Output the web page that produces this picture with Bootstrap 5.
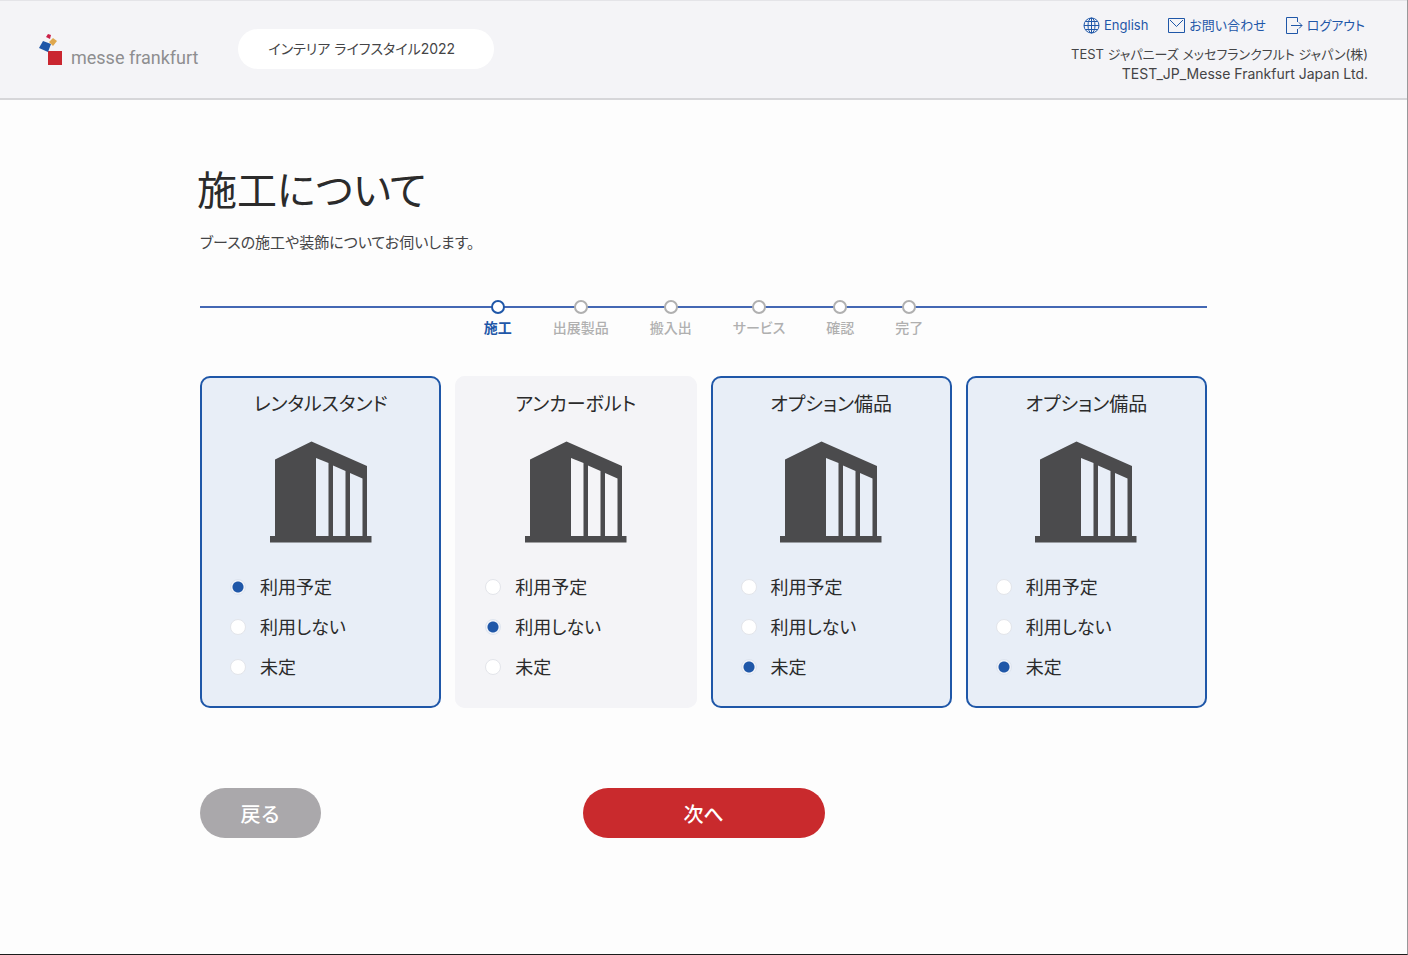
<!DOCTYPE html>
<html lang="ja">
<head>
<meta charset="utf-8">
<meta name="viewport" content="width=device-width, initial-scale=1">
<title>施工について</title>
<link href="https://cdn.jsdelivr.net/npm/bootstrap@5.3.0/dist/css/bootstrap.min.css" rel="stylesheet">
<style>
  :root { --blue: #1f57a8; --ink: #2b2b2b; --soft: #444446; --red: #c92a2d; --gray: #aaa8ab; }
  body {
    font-family: Inter, "Noto Sans CJK JP", sans-serif;
    font-feature-settings: "palt";
    font-size: 14px;
    line-height: 20px;
    color: var(--ink);
    background: #fdfdfd;
    border-right: 1px solid #98989a;
    border-bottom: 1px solid #1c1c1c;
  }
  .site-header { background: #f4f4f7; border-top: 1px solid #e4e4e8; border-bottom: 2px solid #d6d6d9; padding: 14px 39px 14px; color: var(--soft); }
  .identity { padding-top: 14px; }
  .brand { color: #8e8e90; font-family: Roboto, sans-serif; font-size: 18px; line-height: 24px; padding-top: 5px; }
  .brand svg { width: 24px; height: 32px; }
  .brand span { padding-top: 12px; }
  .event-pill { background: #fff; border-radius: 20px; padding: 10px 30px; min-width: 256px; margin-left: 40px; }
  .tools { gap: 20px; font-size: 13px; padding-right: 3px; margin-bottom: 9px; }
  .tools a { color: var(--blue); }
  .tools svg { width: 17px; height: 17px; fill: none; stroke: currentColor; }
  .company { font-size: 13px; }
  .page-body { max-width: 1007px; }
  h1 { font-size: 40px; line-height: 56px; font-weight: 400; margin: 63px 0 14px -3px; }
  .lead-in { font-size: 15px; color: var(--soft); }
  .steps { margin: 47px 0 0; background: linear-gradient(#4468b4, #4468b4) 0 6px / 100% 2px no-repeat; gap: 41px; font-weight: 500; color: #b0b0b0; }
  .steps li::before { content: ""; width: 14px; height: 14px; border-radius: 50%; border: 2px solid #b0b0b0; background: #fff; margin-bottom: 4px; }
  .steps .current { color: var(--blue); font-weight: 700; }
  .steps .current::before { border-color: var(--blue); }
  .choices { --bs-gutter-x: 14px; --bs-gutter-y: 14px; margin-top: 24px; }
  .choice { min-width: 0; margin: 0; background: #f4f4f7; border: 2px solid #f4f4f7; border-radius: 10px; padding: 15px 28px 19px; }
  .choice.picked { background: #e8eef7; border-color: var(--blue); }
  .choice legend { font-size: 19px; line-height: 24px; margin: 0 0 24px; text-align: center; }
  .choice svg { clear: both; width: 102px; height: 102px; display: block; margin: 0 auto 24px; fill: #4b4b4d; }
  .form-check { min-height: 40px; padding: 0; margin: 0; gap: 14px; }
  .form-check .form-check-input { width: 16px; height: 16px; margin: 0; float: none; flex: none; background: #fff; border: 1px solid #e3e5ea; }
  .form-check .form-check-input:checked { background: radial-gradient(circle, var(--blue) 5px, #f0f3f9 6px); border-color: #dfe5ef; }
  .form-check-label { font-size: 18px; line-height: 38px; padding-top: 2px; }
  .actions { margin: 80px 0 116px; display: grid; grid-template-columns: 1fr 242px 1fr; }
  .actions .btn { height: 50px; border-radius: 25px; border: 0; color: #fff; font-size: 20px; font-weight: 500; padding: 8px 12px 4px; }
  .btn-return { width: 121px; background: var(--gray); }
  .btn-next { background: var(--red); }
</style>
</head>
<body>
<svg class="d-none" aria-hidden="true">
  <symbol id="booth" viewBox="0 0 102 102"><path fill-rule="evenodd" d="M5 18.500 41.500 0.500 97 25V95h4.500v6.500H0V95h5zM46 17V95H58.500V22zM63 24.500V95H75.500V30zM80 32V95H92.500V37.500z"/></symbol>
</svg>

<header class="site-header d-flex justify-content-between align-items-start">
  <div class="identity d-flex align-items-start">
    <a href="#" class="brand d-flex gap-2 text-decoration-none">
      <svg viewBox="0 0 24 32" aria-hidden="true">
        <path fill="#ca2630" d="M9 17h14v14H9z"/>
        <path fill="#1f57a8" d="m4 7 8 3-3 8-9-4z"/>
        <path fill="#dfa84e" d="m14 4 4 3-4 5-4-4z"/>
        <path fill="#cb2148" d="m9 0 3 1-1 4-4-2z"/>
      </svg>
      <span>messe frankfurt</span>
    </a>
    <div class="event-pill">インテリア ライフスタイル2022</div>
  </div>
  <div class="text-end">
    <nav class="tools d-flex justify-content-end">
      <a href="#" class="d-flex align-items-center gap-1 text-decoration-none">
        <svg viewBox="0 0 17 17" aria-hidden="true"><circle cx="8.500" cy="8.500" r="7.500"/><ellipse cx="8.500" cy="8.500" rx="3.500" ry="7.500"/><path d="M8.500 1v15M1 8.500h15M2.500 4.500h12M2.500 12.500h12"/></svg>English</a>
      <a href="#" class="d-flex align-items-center gap-1 text-decoration-none">
        <svg viewBox="0 0 17 17" aria-hidden="true"><path d="M.5 1.500h16v14H.5zM2 3l6.500 6.500L15 3"/></svg>お問い合わせ</a>
      <a href="#" class="d-flex align-items-center gap-1 text-decoration-none">
        <svg viewBox="0 0 17 17" aria-hidden="true"><path d="M11.500 5V.5H.5v16h11V12M5 8.500h11M13 5.500l3 3-3 3"/></svg>ログアウト</a>
    </nav>
    <div class="company">TEST ジャパニーズ メッセフランクフルト ジャパン(株)</div>
    <div>TEST_JP_Messe Frankfurt Japan Ltd.</div>
  </div>
</header>

<main class="page-body container-fluid p-0">
  <h1>施工について</h1>
  <p class="lead-in mb-0">ブースの施工や装飾についてお伺いします。</p>

  <ol class="steps list-unstyled d-flex justify-content-center">
    <li class="current d-flex flex-column align-items-center" aria-current="step">施工</li>
    <li class="d-flex flex-column align-items-center">出展製品</li>
    <li class="d-flex flex-column align-items-center">搬入出</li>
    <li class="d-flex flex-column align-items-center">サービス</li>
    <li class="d-flex flex-column align-items-center">確認</li>
    <li class="d-flex flex-column align-items-center">完了</li>
  </ol>

  <form>
    <div class="choices row row-cols-2 row-cols-lg-4">
      <div class="col"><fieldset class="choice picked">
        <legend class="float-start w-100">レンタルスタンド</legend>
        <svg aria-hidden="true"><use href="#booth"/></svg>
        <div class="form-check d-flex align-items-center"><input class="form-check-input" type="radio" name="stand" id="stand1" checked><label class="form-check-label" for="stand1">利用予定</label></div>
        <div class="form-check d-flex align-items-center"><input class="form-check-input" type="radio" name="stand" id="stand2"><label class="form-check-label" for="stand2">利用しない</label></div>
        <div class="form-check d-flex align-items-center"><input class="form-check-input" type="radio" name="stand" id="stand3"><label class="form-check-label" for="stand3">未定</label></div>
      </fieldset></div>
      <div class="col"><fieldset class="choice">
        <legend class="float-start w-100">アンカーボルト</legend>
        <svg aria-hidden="true"><use href="#booth"/></svg>
        <div class="form-check d-flex align-items-center"><input class="form-check-input" type="radio" name="bolt" id="bolt1"><label class="form-check-label" for="bolt1">利用予定</label></div>
        <div class="form-check d-flex align-items-center"><input class="form-check-input" type="radio" name="bolt" id="bolt2" checked><label class="form-check-label" for="bolt2">利用しない</label></div>
        <div class="form-check d-flex align-items-center"><input class="form-check-input" type="radio" name="bolt" id="bolt3"><label class="form-check-label" for="bolt3">未定</label></div>
      </fieldset></div>
      <div class="col"><fieldset class="choice picked">
        <legend class="float-start w-100">オプション備品</legend>
        <svg aria-hidden="true"><use href="#booth"/></svg>
        <div class="form-check d-flex align-items-center"><input class="form-check-input" type="radio" name="option" id="option1"><label class="form-check-label" for="option1">利用予定</label></div>
        <div class="form-check d-flex align-items-center"><input class="form-check-input" type="radio" name="option" id="option2"><label class="form-check-label" for="option2">利用しない</label></div>
        <div class="form-check d-flex align-items-center"><input class="form-check-input" type="radio" name="option" id="option3" checked><label class="form-check-label" for="option3">未定</label></div>
      </fieldset></div>
      <div class="col"><fieldset class="choice picked">
        <legend class="float-start w-100">オプション備品</legend>
        <svg aria-hidden="true"><use href="#booth"/></svg>
        <div class="form-check d-flex align-items-center"><input class="form-check-input" type="radio" name="extra" id="extra1"><label class="form-check-label" for="extra1">利用予定</label></div>
        <div class="form-check d-flex align-items-center"><input class="form-check-input" type="radio" name="extra" id="extra2"><label class="form-check-label" for="extra2">利用しない</label></div>
        <div class="form-check d-flex align-items-center"><input class="form-check-input" type="radio" name="extra" id="extra3" checked><label class="form-check-label" for="extra3">未定</label></div>
      </fieldset></div>
    </div>
    <div class="actions">
      <button type="button" class="btn btn-return">戻る</button>
      <button type="submit" class="btn btn-next">次へ</button>
    </div>
  </form>
</main>
<script src="https://cdn.jsdelivr.net/npm/bootstrap@5.3.0/dist/js/bootstrap.bundle.min.js"></script>
</body>
</html>
